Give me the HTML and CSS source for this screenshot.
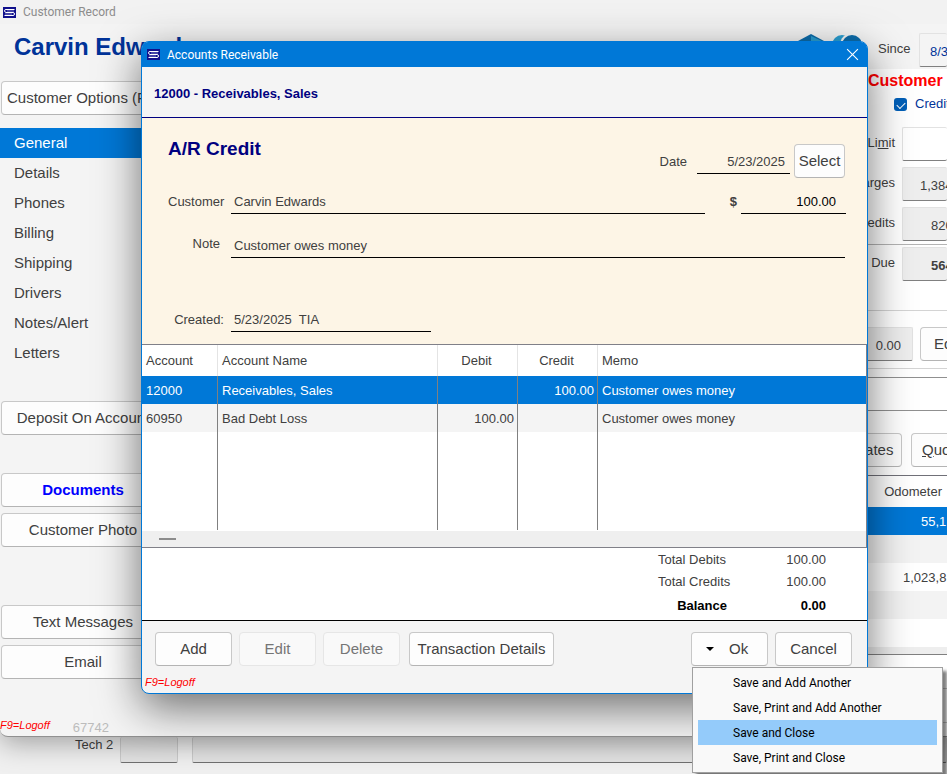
FILE: index.html
```html
<!DOCTYPE html>
<html lang="en">
<head>
<meta charset="utf-8">
<title>Accounts Receivable</title>
<link rel="stylesheet" href="styles.css">
</head>
<body>
<svg class="defs" aria-hidden="true">
  <symbol id="app-mark" viewBox="0 0 13 11">
    <rect width="13" height="11" fill="#10108c"/>
    <path d="M11.500 2.500H3Q1.500 2.500 1.500 3.800T3 5.500H10Q11.500 5.500 11.500 7T10 8.500H1.500" fill="none" stroke="#fff" stroke-width="1"/>
    <path d="M4 4H11M2 7H9" fill="none" stroke="#c4c4ea" stroke-width=".6"/>
  </symbol>
</svg>
<div class="desktop">
  <main class="record">
    <div class="record-bar"><svg class="mark"><use href="#app-mark"/></svg><span>Customer Record</span></div>
    <header class="record-head">
      <h1>Carvin Edwards</h1>
      <svg class="brand" viewBox="0 0 64 32" aria-hidden="true">
        <path d="M1 8L14 1L27 8V22L14 29L1 22Z" fill="#0c6cab"/>
        <path d="M14 3L25 8V14H14Z" fill="#2a9fd2"/>
        <circle cx="45" cy="12" r="10" fill="#2a9fd2"/>
        <circle cx="55" cy="12" r="12" fill="#f4f4f4"/>
        <circle cx="55" cy="12" r="10" fill="#0c6cab"/>
      </svg>
      <label for="since">Since</label>
      <input id="since" class="field since" value="8/3">
    </header>
    <div class="record-body">
      <nav class="side">
        <button class="btn options">Customer Options (F</button>
        <ul class="tabs">
          <li><a class="on" href="#">General</a></li>
          <li><a href="#">Details</a></li>
          <li><a href="#">Phones</a></li>
          <li><a href="#">Billing</a></li>
          <li><a href="#">Shipping</a></li>
          <li><a href="#">Drivers</a></li>
          <li><a href="#">Notes/Alert</a></li>
          <li><a href="#">Letters</a></li>
        </ul>
        <div class="stack"><button class="btn">Deposit On Account</button></div>
        <div class="stack"><button class="btn docs">Documents</button><button class="btn">Customer Photo</button></div>
        <div class="stack messages"><button class="btn">Text Messages</button><button class="btn">Email</button></div>
        <div class="side-foot"><span class="logoff">F9=Logoff</span><span class="number">67742</span></div>
      </nav>
      <section class="credit">
        <h2>Customer</h2>
        <label class="tick"><input type="checkbox" checked><span>Credit</span></label>
        <div class="pairs">
          <label for="limit">Li<u>m</u>it</label><input id="limit" class="field" value="">
          <label for="charges">Charges</label><input id="charges" class="field dim charges" value="1,384">
          <label for="credits">Credits</label><input id="credits" class="field dim credits" value="820">
        </div>
        <div class="pairs due">
          <label for="due">Bal. Due</label><input id="due" class="field dim strong" value="564">
        </div>
        <div class="pay"><input class="field dim paid" aria-label="Paid" value="0.00"><button class="btn edit">Ed</button></div>
        <div class="blank"></div>
        <div class="pay work"><button class="btn estimates">Estimates</button><button class="btn quotes"><u>Q</u>uo</button></div>
        <table class="cars">
          <tr><th>Odometer</th></tr>
          <tr class="on"><td class="far">55,1</td></tr>
          <tr class="alt"><td></td></tr>
          <tr><td class="near">1,023,8</td></tr>
          <tr class="alt"><td></td></tr>
          <tr><td></td></tr>
        </table>
        <div class="cars-scroll"></div>
        <div class="cars-foot"></div>
        <div class="cars-foot"></div>
      </section>
    </div>
  </main>
  <footer class="behind"><label for="tech">Tech 2</label><input id="tech" class="field dim tech"><input class="field dim tech-note" aria-label="Tech note"></footer>

  <section class="dialog" role="dialog" aria-label="Accounts Receivable">
    <header class="dialog-bar">
      <svg class="mark"><use href="#app-mark"/></svg><span>Accounts Receivable</span>
      <button class="close" aria-label="Close"><svg viewBox="0 0 12 12"><path d="M1 1L11 11M11 1L1 11" stroke="#fff" stroke-width="1"/></svg></button>
    </header>
    <h2 class="ledger">12000 - Receivables, Sales</h2>
    <form class="entry">
      <div class="entry-top">
        <h3>A/R Credit</h3>
        <label for="date">Date</label><input id="date" class="line date" value="5/23/2025"><button type="button" class="btn select">Select</button>
      </div>
      <div class="entry-row">
        <label for="customer">Customer</label><input id="customer" class="line grow" value="Carvin Edwards">
        <label for="amount" class="dollar">$</label><input id="amount" class="line amount" value="100.00">
      </div>
      <div class="entry-row note"><label for="note">Note</label><input id="note" class="line grow" value="Customer owes money"></div>
      <div class="entry-row created"><label for="created">Created:</label><input id="created" class="line stamp" value="5/23/2025&nbsp; TIA"></div>
    </form>
    <div class="grid">
      <table class="lines">
        <colgroup><col class="c-account"><col class="c-name"><col class="c-money"><col class="c-money"><col></colgroup>
        <thead><tr><th>Account</th><th>Account Name</th><th class="mid">Debit</th><th class="mid">Credit</th><th>Memo</th></tr></thead>
        <tbody>
          <tr class="on"><td>12000</td><td>Receivables, Sales</td><td></td><td class="num">100.00</td><td>Customer owes money</td></tr>
          <tr class="alt"><td>60950</td><td>Bad Debt Loss</td><td class="num">100.00</td><td></td><td>Customer owes money</td></tr>
          <tr class="rest"><td></td><td></td><td></td><td></td><td></td></tr>
        </tbody>
      </table>
      <div class="scroll"><span class="thumb"></span></div>
    </div>
    <dl class="totals">
      <dt>Total Debits</dt><dd>100.00</dd>
      <dt>Total Credits</dt><dd>100.00</dd>
      <dt class="balance">Balance</dt><dd class="balance">0.00</dd>
    </dl>
    <footer class="actions">
      <div class="bar">
        <button class="btn std">Add</button><button class="btn std" disabled>Edit</button><button class="btn std" disabled>Delete</button><button class="btn details">Transaction Details</button>
        <div class="ok-wrap">
          <button class="btn std ok" aria-haspopup="menu"><svg viewBox="0 0 8 4"><path d="M0 0H8L4 4Z" fill="#000"/></svg>Ok</button>
          <div class="menu" role="menu">
            <button role="menuitem">Save and Add Another</button>
            <button role="menuitem">Save, Print and Add Another</button>
            <button role="menuitem" class="on">Save and Close</button>
            <button role="menuitem">Save, Print and Close</button>
          </div>
        </div>
        <button class="btn std">Cancel</button>
      </div>
      <span class="logoff">F9=Logoff</span>
    </footer>
  </section>
</div>
</body>
</html>
```
FILE: styles.css
```css
* { box-sizing: border-box; }
body {
  margin: 0;
  background: #f0f0f0;
  color: #404040;
  font: 13px/16px "Liberation Sans", Arial, sans-serif;
}
h1, h2, h3, ul, dl, dd { margin: 0; padding: 0; }
button, input { font: inherit; color: inherit; margin: 0; }
table { border-collapse: collapse; width: 100%; table-layout: fixed; }
.defs { display: none; }
.desktop { position: relative; min-height: 100vh; overflow: hidden; }

/* shared controls */
.mark { width: 13px; height: 11px; flex: none; }
.btn {
  height: 34px;
  padding: 0;
  border: 1px solid #c8c8c8;
  border-bottom-color: #b4b4b4;
  border-radius: 4px;
  background: #fdfdfd;
  font-size: 15px;
  white-space: nowrap;
}
.btn:disabled { color: #757575; background: #f9f9f9; border-color: #e6e6e6; }
.field {
  height: 34px;
  min-width: 0;
  padding: 2px 0 0;
  border: 1px solid #e2e2e2;
  border-bottom-color: #808080;
  border-radius: 2px;
  background: #fff;
}
.dim { background: #eee; }
.logoff { color: #f00; font-size: 11px; font-style: italic; }

/* customer record window */
.record {
  position: relative;
  background: #f4f4f4;
  border-bottom: 1px solid #909090;
  border-radius: 0 0 0 8px;
  box-shadow: 0 6px 28px rgba(0, 0, 0, .34);
}
.record-bar {
  display: flex;
  align-items: center;
  gap: 7px;
  height: 24px;
  padding-left: 3px;
  background: #f2f2f2;
  color: #8c8c8c;
  font: 12px/16px Roboto, "Noto Sans", sans-serif;
}
.record-head { display: flex; height: 45px; padding-left: 14px; }
.record-head h1 { flex: 1; color: #039; font-size: 24px; line-height: 46px; }
.brand { width: 64px; height: 32px; margin: 9px 17px 0 0; }
.record-head label { width: 41px; line-height: 49px; }
.since { width: 28px; margin-top: 9px; padding-left: 10px; border-right: 0; background: #f4f4f4; color: #039; }
.record-body { display: flex; justify-content: space-between; }
.side { width: 166px; padding: 12px 1px 0; }
.side .btn { display: block; width: 100%; }
.side .options { padding-left: 5px; text-align: left; }
.tabs { margin: 13px -1px 33px; list-style: none; }
.tabs a { display: block; padding-left: 14px; color: #404040; font-size: 15px; line-height: 30px; text-decoration: none; }
.tabs .on { background: #0078d7; color: #fff; }
.stack { display: grid; gap: 6px; margin-bottom: 38px; }
.stack + .messages { margin-top: 58px; }
.side .docs { color: #00f; font-weight: bold; }
.side-foot { display: flex; gap: 23px; height: 19px; margin-left: -1px; }
.number { padding-top: 3px; color: #bcbcbc; }

.credit { width: 128px; background: #fff; overflow: hidden; }
.credit h2 { padding-left: 49px; color: #f00; font-size: 16px; line-height: 24px; }
.tick { display: flex; align-items: center; gap: 8px; height: 22px; padding-left: 75px; color: #039; }
.tick input {
  appearance: none;
  flex: none;
  width: 13px;
  height: 13px;
  border-radius: 3px;
  background: #005fb8;
  display: grid;
  place-items: center;
}
.tick input::after { content: ""; width: 7px; height: 4px; border: solid #fff; border-width: 0 0 1px 1px; rotate: -45deg; }
.pairs { display: grid; grid-template-columns: 76px 1fr; gap: 6px 7px; padding: 12px 0 3px; border-bottom: 1px solid #b4b4b4; }
.pairs label { text-align: right; line-height: 32px; }
.pairs .field { width: 100%; border-right: 0; }
.pairs .charges { padding-left: 17px; }
.pairs .credits, .pairs .strong { padding-left: 28px; }
.pairs .strong { font-weight: bold; }
.due { padding: 2px 0 29px; border-color: #d4d4d4; }
.pay { display: flex; gap: 7px; padding: 16px 0 7px; border-bottom: 1px solid #d4d4d4; }
.paid { flex: none; width: 94px; padding-right: 11px; text-align: right; }
.edit { flex: 1; border-right: 0; border-radius: 4px 0 0 4px; min-width: 0; padding-left: 13px; text-align: left; }
.work .quotes { flex: 1; min-width: 0; border-right: 0; border-radius: 4px 0 0 4px; padding-left: 10px; text-align: left; }
.blank { height: 34px; margin-top: 8px; border: solid #909090; border-width: 1px 0; }
.work { gap: 9px; padding: 22px 0 8px; border-color: #707078; }
.estimates { flex: none; width: 83px; }
.cars th { height: 31px; padding: 0 5px 0 0; font-weight: normal; text-align: right; }
.cars td { height: 28px; padding: 1px 0 0; }
.cars .on { background: #0078d7; color: #fff; }
.cars .alt { background: #f3f3f3; }
.cars .far { padding-left: 102px; }
.cars .near { padding-left: 84px; }
.cars-scroll { height: 8px; background: #eee; border-bottom: 1px solid #808080; }
.cars-foot { height: 34px; border-bottom: 1px solid #c8c8c8; }

.behind { display: flex; height: 37px; padding-left: 75px; }
.behind label { width: 45px; }
.behind .field { height: 26px; border-color: #ccc; border-width: 0 1px 1px; border-bottom-color: #707070; background: #e4e4e4; }
.tech { width: 58px; margin-right: 14px; }
.tech-note { flex: 1; }

/* accounts receivable dialog */
.dialog {
  position: absolute;
  top: 41px;
  left: 141px;
  right: 79px;
  border: 1px solid #0078d7;
  border-radius: 8px;
  background: #f4f4f4;
  box-shadow: 0 14px 44px rgba(0, 0, 0, .55);
}
.dialog-bar {
  display: flex;
  align-items: center;
  gap: 7px;
  height: 25px;
  padding: 0 8px 0 5px;
  border-radius: 6px 6px 0 0;
  background: #0078d7;
  color: #fff;
  font: 12px/16px Roboto, "Noto Sans", sans-serif;
}
.close { width: 13px; height: 13px; margin-left: auto; padding: 0; border: 0; background: none; }
.close svg { display: block; }
.ledger { height: 51px; padding: 1px 12px 0; border-bottom: 1px solid #000080; color: #000080; font-size: 13px; line-height: 52px; }
.entry { height: 226px; padding: 26px 21px 0 26px; background: #fdf5e6; }
.entry-top, .entry-row { display: flex; }
.entry-top { height: 34px; padding-right: 1px; }
.entry h3 { flex: 1; color: #000080; font-size: 19px; line-height: 10px; }
.entry label { line-height: 36px; }
.line {
  min-width: 0;
  padding: 2px 3px 0;
  border: 0;
  border-bottom: 1px solid #000;
  background: none;
}
.date { width: 93px; height: 30px; margin: 0 4px 0 10px; padding: 6px 5px 0 0; text-align: right; }
.select { width: 51px; }
.entry-row { height: 26px; margin-top: 10px; }
.entry-row label { width: 56px; margin-right: 7px; text-align: right; }
.entry-row .line { height: 26px; }
.entry .entry-row label { line-height: 28px; }
.grow { flex: 1; }
.entry-row .dollar { width: 32px; margin-right: 4px; font-weight: bold; }
.amount { width: 105px; padding-right: 10px; text-align: right; color: #000; }
.note { margin-top: 18px; padding-right: 1px; }
.entry .note label { padding-right: 4px; line-height: 24px; }
.created { margin-top: 48px; }
.stamp { width: 200px; }

.grid { border: solid #808088; border-width: 1px 1px 1px 0; background: #fff; }
.lines { border-collapse: separate; border-spacing: 0; }
.c-account { width: 76px; }
.c-name { width: 220px; }
.c-money { width: 80px; }
.lines th, .lines td { padding: 0 4px; border-right: 1px solid #808080; font-weight: normal; text-align: left; white-space: nowrap; }
.lines th { height: 31px; border-color: #e4e4e4; }
.lines td { height: 28px; padding-top: 1px; }
.lines th:last-child, .lines td:last-child { border-right: 0; }
.lines th.mid { padding-right: 6px; text-align: center; }
.lines .num { padding-right: 3px; text-align: right; }
.lines .on { background: #0078d7; color: #fff; }
.lines .alt { background: #f4f4f4; }
.lines .rest td { height: 98px; }
.scroll { height: 17px; padding: 7px 17px; background: #efefef; border-top: 1px solid #fff; }
.thumb { display: block; width: 17px; height: 2px; background: #8c8c8c; }
.totals {
  display: grid;
  grid-template-columns: 74px 94px;
  justify-content: end;
  height: 73px;
  padding: 1px 41px 0 0;
  border-bottom: 1px solid #000;
  background: #fff;
  line-height: 22px;
  grid-auto-rows: 22px 22px 26px;
}
.totals dd { text-align: right; }
.totals .balance { color: #000; font-weight: bold; line-height: 26px; }
.totals dt.balance { padding-right: 5px; text-align: right; }
.actions { height: 72px; padding: 11px 15px 0 3px; }
.bar { display: flex; gap: 7px; padding-left: 10px; }
.std { width: 77px; }
.details { width: 145px; margin-left: 2px; }
.actions .logoff { display: block; padding-top: 8px; }
.ok-wrap { position: relative; margin-left: auto; }
.ok { display: flex; align-items: center; gap: 15px; padding-left: 14px; }
.ok svg { width: 8px; height: 4px; }
.menu {
  position: absolute;
  top: 35px;
  left: 1px;
  width: 251px;
  padding: 2px 5px;
  border: 1px solid #a0a0a0;
  background: #f9f9f9;
  box-shadow: 4px 4px 3px rgba(0, 0, 0, .5);
}
.menu button {
  display: block;
  width: 100%;
  height: 25px;
  padding: 0 0 0 35px;
  border: 0;
  background: none;
  color: #000;
  font: 12px/16px Roboto, "Noto Sans", sans-serif;
  text-align: left;
}
.menu .on { background: #94cbfa; }
```
